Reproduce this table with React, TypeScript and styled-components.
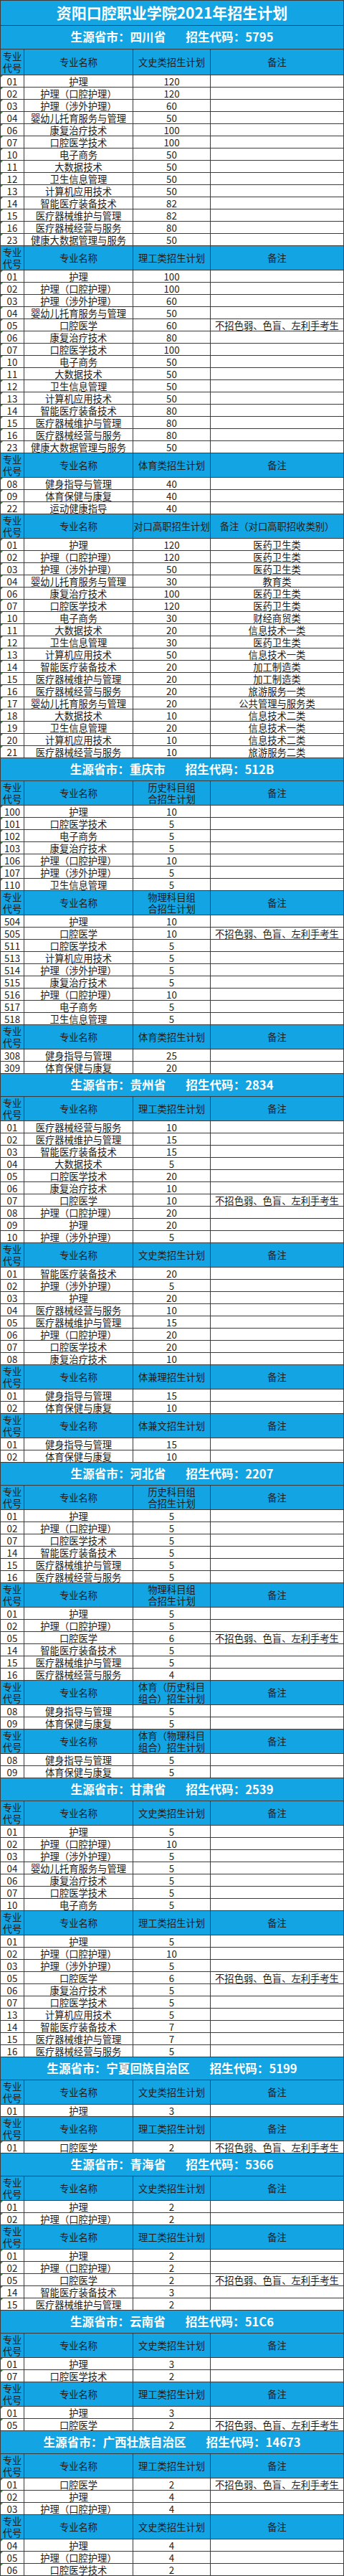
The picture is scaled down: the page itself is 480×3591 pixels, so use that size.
import React from 'react';
import styled, { createGlobalStyle } from 'styled-components';

const colorLine = '#3b3b3b';
const colorBlue = '#12a4e3';
const colorText = '#1c1c1c';
const fontStack = '"Noto Sans CJK SC", "Noto Sans", sans-serif';

const NOTE = '不招色弱、色盲、左利手考生';

type Row = [string, string, string, string?];
type Block = { plan: string[]; note?: string; flag?: boolean; rows: Row[] };
type Province = { name: string; code: string; blocks: Block[] };

const WENSHI = ['文史类招生计划'];
const LIGONG = ['理工类招生计划'];

const provinces: Province[] = [
  {
    name: '四川省',
    code: '5795',
    blocks: [
      {
        plan: WENSHI,
        flag: true,
        rows: [
          ['01', '护理', '120'],
          ['02', '护理（口腔护理）', '120'],
          ['03', '护理（涉外护理）', '60'],
          ['04', '婴幼儿托育服务与管理', '50'],
          ['06', '康复治疗技术', '100'],
          ['07', '口腔医学技术', '100'],
          ['10', '电子商务', '50'],
          ['11', '大数据技术', '50'],
          ['12', '卫生信息管理', '50'],
          ['13', '计算机应用技术', '50'],
          ['14', '智能医疗装备技术', '82'],
          ['15', '医疗器械维护与管理', '82'],
          ['16', '医疗器械经营与服务', '80'],
          ['23', '健康大数据管理与服务', '50'],
        ],
      },
      {
        plan: LIGONG,
        flag: true,
        rows: [
          ['01', '护理', '100'],
          ['02', '护理（口腔护理）', '100'],
          ['03', '护理（涉外护理）', '60'],
          ['04', '婴幼儿托育服务与管理', '50'],
          ['05', '口腔医学', '60', NOTE],
          ['06', '康复治疗技术', '80'],
          ['07', '口腔医学技术', '100'],
          ['10', '电子商务', '50'],
          ['11', '大数据技术', '50'],
          ['12', '卫生信息管理', '50'],
          ['13', '计算机应用技术', '50'],
          ['14', '智能医疗装备技术', '80'],
          ['15', '医疗器械维护与管理', '80'],
          ['16', '医疗器械经营与服务', '80'],
          ['23', '健康大数据管理与服务', '50'],
        ],
      },
      {
        plan: ['体育类招生计划'],
        flag: true,
        rows: [
          ['08', '健身指导与管理', '40'],
          ['09', '体育保健与康复', '40'],
          ['22', '运动健康指导', '40'],
        ],
      },
      {
        plan: ['对口高职招生计划'],
        note: '备注（对口高职招收类别）',
        flag: true,
        rows: [
          ['01', '护理', '120', '医药卫生类'],
          ['02', '护理（口腔护理）', '120', '医药卫生类'],
          ['03', '护理（涉外护理）', '50', '医药卫生类'],
          ['04', '婴幼儿托育服务与管理', '30', '教育类'],
          ['06', '康复治疗技术', '100', '医药卫生类'],
          ['07', '口腔医学技术', '120', '医药卫生类'],
          ['10', '电子商务', '30', '财经商贸类'],
          ['11', '大数据技术', '20', '信息技术一类'],
          ['12', '卫生信息管理', '30', '医药卫生类'],
          ['13', '计算机应用技术', '50', '信息技术一类'],
          ['14', '智能医疗装备技术', '20', '加工制造类'],
          ['15', '医疗器械维护与管理', '20', '加工制造类'],
          ['16', '医疗器械经营与服务', '20', '旅游服务一类'],
          ['17', '婴幼儿托育服务与管理', '20', '公共管理与服务类'],
          ['18', '大数据技术', '10', '信息技术二类'],
          ['19', '卫生信息管理', '20', '信息技术一类'],
          ['20', '计算机应用技术', '10', '信息技术二类'],
          ['21', '医疗器械经营与服务', '10', '旅游服务二类'],
        ],
      },
    ],
  },
  {
    name: '重庆市',
    code: '512B',
    blocks: [
      {
        plan: ['历史科目组', '合招生计划'],
        flag: true,
        rows: [
          ['100', '护理', '10'],
          ['101', '口腔医学技术', '5'],
          ['102', '电子商务', '5'],
          ['103', '康复治疗技术', '5'],
          ['106', '护理（口腔护理）', '10'],
          ['107', '护理（涉外护理）', '5'],
          ['110', '卫生信息管理', '5'],
        ],
      },
      {
        plan: ['物理科目组', '合招生计划'],
        rows: [
          ['504', '护理', '10'],
          ['505', '口腔医学', '10', NOTE],
          ['511', '口腔医学技术', '5'],
          ['513', '计算机应用技术', '5'],
          ['514', '护理（涉外护理）', '5'],
          ['515', '康复治疗技术', '5'],
          ['516', '护理（口腔护理）', '10'],
          ['517', '电子商务', '5'],
          ['518', '卫生信息管理', '5'],
        ],
      },
      {
        plan: ['体育类招生计划'],
        rows: [
          ['308', '健身指导与管理', '25'],
          ['309', '体育保健与康复', '20'],
        ],
      },
    ],
  },
  {
    name: '贵州省',
    code: '2834',
    blocks: [
      {
        plan: LIGONG,
        rows: [
          ['01', '医疗器械经营与服务', '10'],
          ['02', '医疗器械维护与管理', '15'],
          ['03', '智能医疗装备技术', '15'],
          ['04', '大数据技术', '5'],
          ['05', '口腔医学技术', '20'],
          ['06', '康复治疗技术', '10'],
          ['07', '口腔医学', '10', NOTE],
          ['08', '护理（口腔护理）', '20'],
          ['09', '护理', '20'],
          ['10', '护理（涉外护理）', '5'],
        ],
      },
      {
        plan: WENSHI,
        rows: [
          ['01', '智能医疗装备技术', '20'],
          ['02', '护理（涉外护理）', '5'],
          ['03', '护理', '20'],
          ['04', '医疗器械经营与服务', '10'],
          ['05', '医疗器械维护与管理', '15'],
          ['06', '护理（口腔护理）', '20'],
          ['07', '口腔医学技术', '20'],
          ['08', '康复治疗技术', '10'],
        ],
      },
      {
        plan: ['体兼理招生计划'],
        rows: [
          ['01', '健身指导与管理', '15'],
          ['02', '体育保健与康复', '10'],
        ],
      },
      {
        plan: ['体兼文招生计划'],
        rows: [
          ['01', '健身指导与管理', '15'],
          ['02', '体育保健与康复', '10'],
        ],
      },
    ],
  },
  {
    name: '河北省',
    code: '2207',
    blocks: [
      {
        plan: ['历史科目组', '合招生计划'],
        rows: [
          ['01', '护理', '5'],
          ['02', '护理（口腔护理）', '5'],
          ['07', '口腔医学技术', '5'],
          ['14', '智能医疗装备技术', '5'],
          ['15', '医疗器械维护与管理', '5'],
          ['16', '医疗器械经营与服务', '5'],
        ],
      },
      {
        plan: ['物理科目组', '合招生计划'],
        rows: [
          ['01', '护理', '5'],
          ['02', '护理（口腔护理）', '5'],
          ['05', '口腔医学', '6', NOTE],
          ['14', '智能医疗装备技术', '5'],
          ['15', '医疗器械维护与管理', '5'],
          ['16', '医疗器械经营与服务', '4'],
        ],
      },
      {
        plan: ['体育（历史科目', '组合）招生计划'],
        rows: [
          ['08', '健身指导与管理', '5'],
          ['09', '体育保健与康复', '5'],
        ],
      },
      {
        plan: ['体育（物理科目', '组合）招生计划'],
        rows: [
          ['08', '健身指导与管理', '5'],
          ['09', '体育保健与康复', '5'],
        ],
      },
    ],
  },
  {
    name: '甘肃省',
    code: '2539',
    blocks: [
      {
        plan: WENSHI,
        rows: [
          ['01', '护理', '5'],
          ['02', '护理（口腔护理）', '10'],
          ['03', '护理（涉外护理）', '5'],
          ['04', '婴幼儿托育服务与管理', '5'],
          ['06', '康复治疗技术', '5'],
          ['07', '口腔医学技术', '5'],
          ['10', '电子商务', '5'],
        ],
      },
      {
        plan: LIGONG,
        rows: [
          ['01', '护理', '5'],
          ['02', '护理（口腔护理）', '10'],
          ['03', '护理（涉外护理）', '5'],
          ['05', '口腔医学', '6', NOTE],
          ['06', '康复治疗技术', '5'],
          ['07', '口腔医学技术', '5'],
          ['13', '计算机应用技术', '5'],
          ['14', '智能医疗装备技术', '7'],
          ['15', '医疗器械维护与管理', '7'],
          ['16', '医疗器械经营与服务', '5'],
        ],
      },
    ],
  },
  {
    name: '宁夏回族自治区',
    code: '5199',
    blocks: [
      { plan: WENSHI, rows: [['01', '护理', '3']] },
      { plan: LIGONG, flag: true, rows: [['01', '口腔医学', '2', NOTE]] },
    ],
  },
  {
    name: '青海省',
    code: '5366',
    blocks: [
      {
        plan: WENSHI,
        flag: true,
        rows: [
          ['01', '护理', '2'],
          ['02', '护理（口腔护理）', '2'],
        ],
      },
      {
        plan: LIGONG,
        flag: true,
        rows: [
          ['01', '护理', '2'],
          ['02', '护理（口腔护理）', '2'],
          ['05', '口腔医学', '2', NOTE],
          ['14', '智能医疗装备技术', '3'],
          ['15', '医疗器械维护与管理', '2'],
        ],
      },
    ],
  },
  {
    name: '云南省',
    code: '51C6',
    blocks: [
      {
        plan: WENSHI,
        flag: true,
        rows: [
          ['01', '护理', '3'],
          ['07', '口腔医学技术', '2'],
        ],
      },
      {
        plan: LIGONG,
        flag: true,
        rows: [
          ['01', '护理', '3'],
          ['05', '口腔医学', '2', NOTE],
        ],
      },
    ],
  },
  {
    name: '广西壮族自治区',
    code: '14673',
    blocks: [
      {
        plan: LIGONG,
        flag: true,
        rows: [
          ['01', '口腔医学', '2', NOTE],
          ['02', '护理', '4'],
          ['03', '护理（口腔护理）', '4'],
        ],
      },
      {
        plan: WENSHI,
        flag: true,
        rows: [
          ['04', '护理', '4'],
          ['05', '护理（口腔护理）', '4'],
          ['06', '口腔医学技术', '2'],
        ],
      },
    ],
  },
];

export default function App() {
  return (
    <>
      <GlobalStyle />
      <Sheet>
        <Banner>资阳口腔职业学院2021年招生计划</Banner>
        {provinces.map((p, pi) => (
          <React.Fragment key={p.code}>
            <ProvinceBar $first={pi === 0}>
              <span>生源省市：{p.name}</span>
              <span>招生代码：{p.code}</span>
            </ProvinceBar>
            {p.blocks.map((b, bi) => (
              <React.Fragment key={bi}>
                <Columns $height={pi === 0 && bi === 0 ? 35 : 33}>
                  <HeadCell>
                    专业
                    <br />
                    代号
                  </HeadCell>
                  <HeadCell>专业名称</HeadCell>
                  <HeadCell>
                    {b.plan.map((line, li) => (
                      <React.Fragment key={li}>
                        {li > 0 && <br />}
                        {line}
                      </React.Fragment>
                    ))}
                  </HeadCell>
                  <HeadCell>{b.note ?? '备注'}</HeadCell>
                </Columns>
                {b.rows.map(([code, name, plan, note], ri) => (
                  <Columns key={ri} $height={16}>
                    <Cell $flag={b.flag}>{code}</Cell>
                    <Cell>{name}</Cell>
                    <Cell>{plan}</Cell>
                    <Cell>{note}</Cell>
                  </Columns>
                ))}
              </React.Fragment>
            ))}
          </React.Fragment>
        ))}
      </Sheet>
    </>
  );
}

const GlobalStyle = createGlobalStyle`
  html, body {
    margin: 0;
    padding: 0;
    background: #ffffff;
  }

  body {
    font-family: ${fontStack};
  }
`;

const Sheet = styled.div`
  width: 480px;
  box-sizing: border-box;
  padding: 1px;
  display: flex;
  flex-direction: column;
  gap: 1px;
  background: ${colorLine};
`;

const Banner = styled.div`
  height: 34px;
  display: flex;
  align-items: center;
  justify-content: center;
  background: ${colorBlue};
  color: #ffffff;
  font-size: 21px;
  font-weight: 700;
  line-height: 1.2;
`;

const ProvinceBar = styled.div<{ $first?: boolean }>`
  height: ${({ $first }) => ($first ? 32 : 31)}px;
  display: flex;
  align-items: center;
  justify-content: center;
  gap: 28px;
  background: ${colorBlue};
  color: #ffffff;
  font-size: 16.6px;
  font-weight: 700;
  line-height: 1.2;
  white-space: nowrap;
`;

const Columns = styled.div<{ $height: number }>`
  height: ${({ $height }) => $height}px;
  display: grid;
  grid-template-columns: 32px 151px 107px 185px;
  column-gap: 1px;
`;

const HeadCell = styled.div`
  display: flex;
  align-items: center;
  justify-content: center;
  background: ${colorBlue};
  color: ${colorText};
  font-size: 13.3px;
  line-height: 16px;
  text-align: center;
  white-space: nowrap;
`;

const Cell = styled.div<{ $flag?: boolean }>`
  position: relative;
  box-sizing: border-box;
  height: 16px;
  padding-top: 1px;
  background: #ffffff;
  color: ${colorText};
  font-size: 13.3px;
  line-height: 15px;
  text-align: center;
  white-space: nowrap;

  ${({ $flag }) =>
    $flag &&
    `
    &::before {
      content: '';
      position: absolute;
      top: 0;
      left: 0;
      border-top: 3px solid #2f8a2f;
      border-right: 3px solid transparent;
    }
  `}
`;
